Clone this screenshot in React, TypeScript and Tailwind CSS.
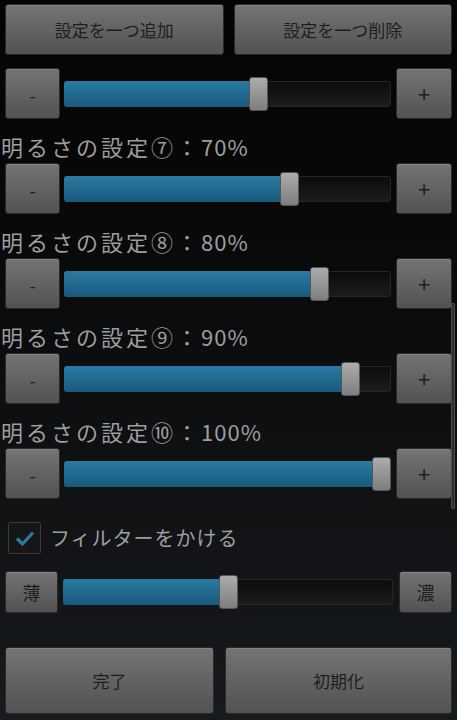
import React from 'react';

const FONT = { fontFamily: '"Noto Sans CJK JP", "Noto Sans", sans-serif' };

const BTN =
  "flex items-center justify-center rounded-[3px] border border-[#2a2a2a] bg-gradient-to-b from-[#747474] to-[#525252] text-[#1e1e1e] shadow-[inset_0_1px_0_rgba(255,255,255,0.12)]";

function Slider({ value, trackClass }: { value: number; trackClass: string }) {
  return (
    <div className={`relative ${trackClass}`}>
      <div className="absolute inset-0 rounded-[3px] border border-[#262626] bg-gradient-to-b from-[#0c0c0c] to-[#1c1c1c]" />
      <div
        className="absolute left-0 top-0 bottom-0 rounded-l-[3px] bg-gradient-to-b from-[#2a7aa3] to-[#195a7c]"
        style={{ width: `calc(9px + ${value} * (100% - 19px))` }}
      />
      <div
        className="absolute top-[-4px] bottom-[-4px] w-[19px] rounded-[3px] border border-[#555] bg-gradient-to-b from-[#acacac] to-[#7e7e7e]"
        style={{ left: `calc(${value} * (100% - 19px))` }}
      />
    </div>
  );
}

function SliderRow({ value }: { value: number }) {
  return (
    <div className="flex h-[51px] items-center px-[5px]">
      <div className={`${BTN} h-[51px] w-[55px] pt-[3px] text-[18px]`}>-</div>
      <Slider value={value} trackClass="ml-[4px] mr-[5px] h-[26px] flex-1" />
      <div className={`${BTN} h-[51px] w-[56px] text-[22px]`}>+</div>
    </div>
  );
}

function Label({ name, pct }: { name: string; pct: string }) {
  return (
    <div className="flex h-[44px] items-end pb-[4px] pl-[1px] text-[22px] leading-[26px] text-[#9e9e9e]">
      <span className="tracking-[3px]">{name}</span>
      <span className="tracking-[1px]">{pct}</span>
    </div>
  );
}

export default function App() {
  const rows = [
    { name: "明るさの設定⑦：", pct: "70%", value: 0.7 },
    { name: "明るさの設定⑧：", pct: "80%", value: 0.8 },
    { name: "明るさの設定⑨：", pct: "90%", value: 0.9 },
    { name: "明るさの設定⑩：", pct: "100%", value: 1 },
  ];

  return (
    <div
      className="relative flex h-[720px] w-[457px] flex-col overflow-hidden bg-gradient-to-b from-[#040404] via-[#0c0d0e] to-[#171a1e]"
      style={FONT}
    >
      <div className="flex gap-[10px] px-[5px] pt-[4px]">
        <div className={`${BTN} h-[51px] flex-1 text-[17px]`}>設定を一つ追加</div>
        <div className={`${BTN} h-[51px] flex-1 text-[17px]`}>設定を一つ削除</div>
      </div>

      <div className="mt-[13px]">
        <SliderRow value={0.6} />
      </div>

      {rows.map((r) => (
        <div key={r.name}>
          <Label name={r.name} pct={r.pct} />
          <SliderRow value={r.value} />
        </div>
      ))}

      <div className="mt-[23px] flex items-center pl-[8px]">
        <div className="flex h-[32px] w-[33px] items-center justify-center rounded-[2px] border border-[#3a3a3a] bg-[#161616]">
          <svg width="22" height="18" viewBox="0 0 22 18">
            <path d="M3 9.5 L8.5 15 L19 3.5" fill="none" stroke="#2b7aa1" strokeWidth="3.2" />
          </svg>
        </div>
        <span className="ml-[9px] text-[20px] tracking-[1px] text-[#9e9e9e]">フィルターをかける</span>
      </div>

      <div className="mt-[17px] flex h-[42px] items-center px-[5px]">
        <div className={`${BTN} h-[42px] w-[53px] text-[18px]`}>薄</div>
        <Slider value={0.5} trackClass="ml-[5px] mr-[6px] h-[26px] flex-1" />
        <div className={`${BTN} h-[42px] w-[53px] text-[18px]`}>濃</div>
      </div>

      <div className="mt-[34px] flex gap-[11px] px-[5px]">
        <div className={`${BTN} h-[67px] w-[209px] text-[17px]`}>完了</div>
        <div className={`${BTN} h-[67px] flex-1 text-[17px]`}>初期化</div>
      </div>

      <div className="absolute right-[2px] top-[303px] h-[206px] w-[4px] rounded-[1px] border border-[#4a4a4a] bg-[#2e2e2e]" />
    </div>
  );
}
